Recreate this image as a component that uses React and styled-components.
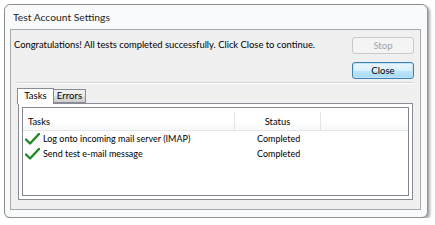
import React from 'react'
import styled, { createGlobalStyle } from 'styled-components'

const GlobalStyle = createGlobalStyle`
  html, body {
    margin: 0;
    padding: 0;
    background: #ffffff;
  }
  body {
    font-family: Lato, "Noto Sans", sans-serif;
    font-size: 9.6px;
    color: #000;
  }
`

const Window = styled.div`
  box-sizing: border-box;
  margin: 4px 0 0 4px;
  width: 424px;
  height: 214px;
  border: 1px solid #8e8f8f;
  border-radius: 6px;
  background: #f9fafb;
  box-shadow: 2px 2px 3px rgba(0, 0, 0, 0.35);
  display: flex;
  flex-direction: column;
  padding: 0 6px 7px 5px;
`

const TitleBar = styled.div`
  height: 24px;
  display: flex;
  align-items: center;
  padding-left: 3px;
  font-size: 10.3px;
  color: #1e1e1e;
`

const Client = styled.div`
  flex: 1;
  border: 1px solid #a7a9ab;
  background: #f0f0f0;
  display: flex;
  flex-direction: column;
  padding: 7px 6px 9px 3px;
`

const TopRow = styled.div`
  display: flex;
  justify-content: space-between;
  align-items: flex-start;
`

const Message = styled.div`
  padding-top: 2px;
  font-size: 9.4px;
  white-space: nowrap;
`

const ButtonStack = styled.div`
  display: flex;
  flex-direction: column;
  gap: 8px;
`

const Button = styled.button`
  box-sizing: border-box;
  width: 62px;
  height: 17px;
  padding: 0;
  font-family: inherit;
  font-size: 9.6px;
  border-radius: 3px;
  border: 1px solid ${p => (p.$default ? '#3c7fb1' : '#c9c9c9')};
  color: ${p => (p.$disabled ? '#a3a3a3' : '#000')};
  background: ${p =>
    p.$disabled
      ? '#f4f4f4'
      : 'linear-gradient(to bottom, #eaf6fd 0%, #d9f0fc 50%, #bee6fd 51%, #a7d9f5 100%)'};
  box-shadow: ${p => (p.$default ? 'inset 0 0 0 1px #c4e3f6' : 'none')};
`

const Separator = styled.div`
  height: 1px;
  background: #d5d5d5;
  border-bottom: 1px solid #ffffff;
  margin: 3px 0 3px 3px;
`

const TabArea = styled.div`
  flex: 1;
  display: flex;
  flex-direction: column;
  margin: 0 1px 0 4px;
`

const TabStrip = styled.div`
  display: flex;
  align-items: flex-end;
  height: 16px;
  margin-left: -1px;
  position: relative;
  z-index: 1;
`

const Tab = styled.div`
  box-sizing: border-box;
  height: ${p => (p.$active ? '16px' : '14px')};
  width: ${p => (p.$active ? '37px' : '32px')};
  padding-bottom: ${p => (p.$active ? '2px' : '1px')};
  display: flex;
  align-items: center;
  justify-content: center;
  border: 1px solid #898c95;
  border-bottom: ${p => (p.$active ? 'none' : '1px solid #898c95')};
  border-left: ${p => (p.$active ? '1px solid #898c95' : 'none')};
  background: ${p =>
    p.$active ? '#ffffff' : 'linear-gradient(to bottom, #f2f2f2 0%, #ebebeb 50%, #dddddd 51%, #cfcfcf 100%)'};
  margin-bottom: ${p => (p.$active ? '-1px' : '0')};
`

const TabPanel = styled.div`
  flex: 1;
  border: 1px solid #898c95;
  background: #ffffff;
  padding: 3px;
  display: flex;
`

const ListBox = styled.div`
  flex: 1;
  border: 1px solid #828790;
  background: #ffffff;
  display: flex;
  flex-direction: column;
  font-size: 9px;
`

const HeaderRow = styled.div`
  display: grid;
  grid-template-columns: 212px 86px 1fr;
  height: 22px;
  border-bottom: 1px solid #e5e5e5;
  background: linear-gradient(to bottom, #ffffff 0%, #ffffff 60%, #f7f8f9 100%);
  font-size: 9.4px;
`

const HeaderCell = styled.div`
  display: flex;
  align-items: flex-end;
  padding-bottom: 3px;
  justify-content: ${p => (p.$center ? 'center' : 'flex-start')};
  padding-left: ${p => (p.$center ? '0' : '5px')};
  border-right: ${p => (p.$last ? 'none' : '1px solid #e5e5e5')};
  margin-top: 4px;
`

const Row = styled.div`
  display: grid;
  grid-template-columns: 212px 86px 1fr;
  height: 15px;
  align-items: center;
`

const TaskCell = styled.div`
  display: flex;
  align-items: center;
  gap: 3px;
  padding-left: 2px;
`

const StatusCell = styled.div`
  padding-left: 22px;
`

const Check = () => (
  <svg width="15" height="12" viewBox="0 0 15 12">
    <path d="M1 6.5 L5 10.5 L14 1" fill="none" stroke="#1f8a1f" strokeWidth="2.4" strokeLinecap="round" strokeLinejoin="round" />
  </svg>
)

const tasks = [
  { name: 'Log onto incoming mail server (IMAP)', status: 'Completed' },
  { name: 'Send test e-mail message', status: 'Completed' },
]

export default function App() {
  return (
    <>
      <GlobalStyle />
      <Window>
        <TitleBar>Test Account Settings</TitleBar>
        <Client>
          <TopRow>
            <Message>Congratulations! All tests completed successfully. Click Close to continue.</Message>
            <ButtonStack>
              <Button $disabled>Stop</Button>
              <Button $default>Close</Button>
            </ButtonStack>
          </TopRow>
          <Separator />
          <TabArea>
            <TabStrip>
              <Tab $active>Tasks</Tab>
              <Tab>Errors</Tab>
            </TabStrip>
            <TabPanel>
              <ListBox>
                <HeaderRow>
                  <HeaderCell>Tasks</HeaderCell>
                  <HeaderCell $center>Status</HeaderCell>
                  <HeaderCell $last />
                </HeaderRow>
                {tasks.map(t => (
                  <Row key={t.name}>
                    <TaskCell>
                      <Check />
                      {t.name}
                    </TaskCell>
                    <StatusCell>{t.status}</StatusCell>
                    <div />
                  </Row>
                ))}
              </ListBox>
            </TabPanel>
          </TabArea>
        </Client>
      </Window>
    </>
  )
}
